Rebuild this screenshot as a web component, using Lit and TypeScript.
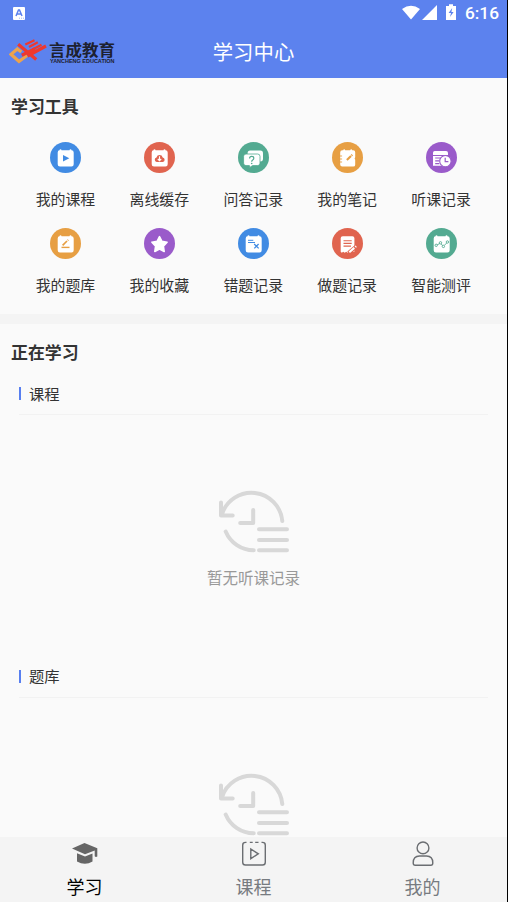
import { LitElement, html, svg, css } from "lit";
import { customElement, property } from "lit/decorators.js";

const pad = svg`<path d="M9.5 8.3q0-1 1-1t1 1h8q0-1 1-1t1 1q2.2 0 2.2 2.2v11.8q0 2.3-2.2 2.3h-11.5q-2.3 0-2.3-2.3V10.5q0-2.2 1.8-2.2z" fill="#fff"/>`;

const glyphs: Record<string, (c: string) => unknown> = {
  play: (c) => svg`${pad}<path d="M13 13v6.4l6.3-3.2z" fill=${c}/>`,
  cloud: (c) => svg`${pad}<path d="M12.7 20a2.3 2.3 0 0 1-.2-4.5 3.2 3.2 0 0 1 6.2 0 2.3 2.3 0 0 1 .2 4.5z" fill=${c}/>
    <path d="M15.5 14.3v4.3M13.8 17l1.7 1.7 1.7-1.7" fill="none" stroke="#fff" stroke-width="1.1"/>`,
  ask: (c) => svg`<rect x="9.6" y="8.6" width="15.4" height="10.8" rx="2.6" fill="#fff"/>
    <path d="M8 12h11.6q2.4 0 2.4 2.4v6.8q0 2.4-2.4 2.4h-5l-2.8 1.8-.4-1.8H8q-2.4 0-2.4-2.4v-6.8Q5.6 12 8 12z" fill="#fff" stroke=${c} stroke-width=".8"/>
    <path d="M11.6 16.4q0-2 2.1-2t2.1 1.8q0 1-1.1 1.7t-1 1.8" fill="none" stroke=${c} stroke-width="1.2"/><circle cx="13.7" cy="21.5" r=".8" fill=${c}/>`,
  note: (c) => svg`<path d="M10.3 8.2h.9q.2-1 1-1t1 1h5q.2-1 1-1t1 1h1q2 0 2 2v5l-.6 1.2.6 1.3v5q0 1.9-2 1.9h-11q-2 0-2-2v-12q0-2.4 2.1-2.4z" fill="#fff"/>
    <path d="M7.5 14h2.6M7.5 17h2.6M7.5 20h2.6" stroke=${c} stroke-width=".9"/>
    <path d="M14.9 18.1l4.1-4.1" stroke=${c} stroke-width="2.1"/><path d="M19.5 13.5l.8-.8" stroke=${c} stroke-width="2"/>`,
  clock: (c) => svg`<path d="M8.7 9H20q2 0 2 2v2H7v-2.3Q7 9 8.7 9zM7 14.1h15v8q0 1.7-2 1.7H7z" fill="#fff"/>
    <path d="M9.2 16h5.7M9.2 18.8h4M9.2 21.6h4" stroke=${c} stroke-width="1.2"/>
    <circle cx="19.4" cy="19.2" r="5.7" fill="#fff" stroke=${c} stroke-width="1.1"/><path d="M19.2 15.8v3.8h3.2" fill="none" stroke=${c} stroke-width="1.2"/>`,
  edit: (c) => svg`${pad}<path d="M11.5 19.4h8" stroke=${c} stroke-width="1.4"/><path d="M12.6 17.3l4.4-4.3" stroke=${c} stroke-width="1.7"/><path d="M17.7 12.4l.6-.6" stroke=${c} stroke-width="1.7"/>`,
  star: () => svg`<path d="M15.5 8.6l2.4 4.7 5.2.9-3.7 3.9.8 5.4-4.7-2.4-4.7 2.4.8-5.4-3.7-3.9 5.2-.9z" fill="#fff" stroke="#fff" stroke-width="1.6" stroke-linejoin="round"/>`,
  wrong: (c) => svg`${pad}<path d="M10 12.3h5.3M10 14.5h7" stroke=${c} stroke-width="1"/><path d="M16.2 16l4.5 4.4M20.6 16l-4.3 4.4" stroke=${c} stroke-width="1.3"/>`,
  write: (c) => svg`<path d="M10.8 8.2h9.6q2 0 2 2v13.6h-2.5l-1.2 1-1.5-1-1.5 1-1.5-1-1.5 1-1.5-1-1.4 1-1.1-1V10.3q0-2.1 2.1-2.1z" fill="#fff"/>
    <path d="M11.5 12.7h8.2M11.5 15.4h8.2M11.5 18.1h7.5" stroke=${c} stroke-width="1.1"/>
    <path d="M16.6 25l7.4-6.2" stroke=${c} stroke-width="4"/><path d="M17.3 24.2l5-4.3M23.3 19l.9-.8" stroke="#fff" stroke-width="2.1"/>`,
  chart: (c) => svg`${pad}<path d="M11 16.9l3-1.5M15.1 15.7l1.6 2.2M18.3 17.4l2.6-2.6" stroke=${c} stroke-width=".9"/>
    <g fill="#fff" stroke=${c} stroke-width=".9"><circle cx="10.2" cy="17.3" r="1.2"/><circle cx="14.5" cy="14.8" r="1.2"/><circle cx="17.4" cy="18.4" r="1.2"/><circle cx="21.4" cy="14" r="1.2"/></g>`,
};

const tools = [
  ["play", "#418be3", "我的课程"],
  ["cloud", "#e0644f", "离线缓存"],
  ["ask", "#53aa91", "问答记录"],
  ["note", "#e79f43", "我的笔记"],
  ["clock", "#9a5bca", "听课记录"],
  ["edit", "#e79f43", "我的题库"],
  ["star", "#9a5bca", "我的收藏"],
  ["wrong", "#418be3", "错题记录"],
  ["write", "#e0644f", "做题记录"],
  ["chart", "#53aa91", "智能测评"],
];

@customElement("empty-panel")
class EmptyPanel extends LitElement {
  @property() heading = "";
  static styles = css`
    :host { display: block; height: 282.5px; padding: 0 19px; box-sizing: border-box; }
    .head { display: flex; align-items: center; height: 41px; gap: 8px; border-bottom: 1px solid #f2f2f2; font-size: 15.3px; line-height: 20px; color: #333; }
    .head span:last-child { margin-top: -2px; }
    .bar { width: 2px; height: 13px; background: #587ff0; }
    .body { display: flex; flex-direction: column; align-items: center; padding-top: 73px; }
    .text { margin-top: 12px; font-size: 15.5px; line-height: 22px; color: #999; }
    svg { display: block; }
  `;
  render() {
    return html`
      <div class="head"><span class="bar"></span><span>${this.heading}</span></div>
      <div class="body">
        <svg width="72" height="66" viewBox="0 0 72 66" fill="none" stroke="#d8d8d8" stroke-width="4" stroke-linecap="round" stroke-linejoin="round">
          <path d="M3 14.5v13H14.7M4 26A31 31 0 0 1 64.3 33M7.7 43.5A30.5 30.5 0 0 0 35.7 62.3M35.2 22v13H22.2M41 41.3h28M41 52h28M41 62.3h28"/>
        </svg>
        <div class="text">暂无听课记录</div>
      </div>`;
  }
}

@customElement("app-root")
class AppRoot extends LitElement {
  static styles = css`
    :host { display: flex; flex-direction: column; height: 902px; width: 508px; box-sizing: border-box; border-right: 1px solid #000; background: #fafafa; overflow: hidden; font-family: "Noto Sans CJK SC", sans-serif; color: #333; }
    svg { display: block; }
    header { background: #5c82ee; height: 78px; flex: none; color: #fff; }
    .status { height: 26px; display: flex; align-items: center; justify-content: space-between; padding: 0 8px 0 13px; }
    .signals { display: flex; align-items: center; }
    .time { font: 500 17.3px/26px Roboto, sans-serif; margin-left: 8px; }
    .nav { height: 52px; display: grid; grid-template-columns: 1fr 120px 1fr; align-items: center; }
    .logo { margin-left: 9px; }
    .title { font-size: 20.4px; line-height: 28px; text-align: center; margin-top: -2px; }
    main { flex: 1; min-height: 0; overflow: hidden; }
    h2 { margin: 0; padding-left: 11px; font-size: 16.9px; font-weight: 700; line-height: 24px; }
    .tools { box-sizing: border-box; height: 236px; padding-top: 16px; }
    .grid { display: grid; grid-template-columns: repeat(5, 1fr); padding: 24.3px 19px 0 18.5px; grid-auto-rows: 85.4px; }
    .tool { display: flex; flex-direction: column; align-items: center; gap: 15.1px; font-size: 14.9px; line-height: 22px; white-space: nowrap; }
    .gap { height: 9.5px; background: #f4f4f4; }
    .learning { padding-top: 16.5px; }
    .learning h2 { margin-bottom: 9px; }
    footer { flex: none; height: 65px; background: #f4f4f4; display: grid; grid-template-columns: repeat(3, 1fr); }
    .tab { display: flex; flex-direction: column; align-items: center; padding-top: 3px; gap: 6px; font-size: 18px; line-height: 24px; color: #777b80; }
    .active { color: #000; }
  `;

  render() {
    return html`
      <header>
        <div class="status">
          <svg width="12" height="13" viewBox="0 0 12 13"><rect width="12" height="13" rx="1" fill="#fff"/><path d="M3 9l2.5-6h1L9 9M4 7h4" fill="none" stroke="#5c82ee" stroke-width="1.5"/><path d="M6 11.2h5" stroke="#8ca7f3" stroke-width=".8" stroke-dasharray="1"/></svg>
          <div class="signals">
            <svg width="55" height="18" viewBox="0 0 55 18" fill="#fff">
              <path d="M0 5Q9-1.5 18 5L9 15.5zM35 1V16H20z"/>
              <path d="M44 2h3V.2h4V2h3v14H44z"/><path d="M50.2 4l-3.6 5H49L48 13l3.6-5H49.4z" fill="#5c82ee"/>
            </svg>
            <span class="time">6:16</span>
          </div>
        </div>
        <div class="nav">
          <svg class="logo" width="108" height="28" viewBox="0 0 108 28">
            <g fill="none" stroke-width="3.2">
              <path d="M9.5 10L2 16.3l8 7.2 8-6M8.3 11l4 3" stroke="#eda34c"/>
              <g stroke="#ee382f"><path d="M9.2 6.3L27.2 21.5M12.8 17.2L26 10.8M18.5 18L37 8"/><path d="M16.3 6.5L25.5 2.2M20 9l8.8-4.7M23.5 11.5l9-4.8" stroke-width="2.2"/></g>
            </g>
            <text x="40" y="17.6" textLength="66" lengthAdjust="spacingAndGlyphs" font-size="15.5" font-weight="700" fill="#1d2130">言成教育</text>
            <text x="41" y="24.8" textLength="64.5" lengthAdjust="spacingAndGlyphs" font-family="Liberation Sans, sans-serif" font-size="5" font-weight="700" fill="#1d2130">YANCHENG EDUCATION</text>
          </svg>
          <div class="title">学习中心</div>
        </div>
      </header>
      <main>
        <section class="tools">
          <h2>学习工具</h2>
          <div class="grid">
            ${tools.map(([icon, color, label]) => html`
              <div class="tool">
                <svg width="31" height="31" viewBox="0 0 31 31"><circle cx="15.5" cy="15.5" r="15.5" fill=${color}/>${glyphs[icon](color)}</svg>
                <span>${label}</span>
              </div>`)}
          </div>
        </section>
        <div class="gap"></div>
        <section class="learning">
          <h2>正在学习</h2>
          <empty-panel heading="课程"></empty-panel>
          <empty-panel heading="题库"></empty-panel>
        </section>
      </main>
      <footer>
        <div class="tab active">
          <svg width="28" height="28" viewBox="0 0 28 28" fill="#666"><path d="M1 8.6L13.5 3 26.3 8.2v8.3q-1.6 1-2.6-.3v-5.6L14 14.3z"/><path d="M6 13.2l8 3.2 7.5-3v8.2Q14 26 6 21.6z"/></svg>
          <span>学习</span>
        </div>
        <div class="tab">
          <svg width="28" height="28" viewBox="0 0 28 28" fill="none" stroke="#6b6e72" stroke-width="1.4"><path d="M6.5 2.4H5.5Q2.7 2.4 2.7 5.2v17q0 2.8 2.8 2.8h17q2.8 0 2.8-2.8v-17q0-2.8-2.8-2.8h-1M9.8 2.4h2.9M15.2 2.4h3.3M10.8 9v9.6l7.5-4.8z"/></svg>
          <span>课程</span>
        </div>
        <div class="tab">
          <svg width="28" height="28" viewBox="0 0 28 28" fill="none" stroke="#6b6e72" stroke-width="1.4"><circle cx="14" cy="7.9" r="5.9"/><path d="M4.2 23Q4.2 16 10.5 16h7q6.3 0 6.3 7 0 2.3-2 2.3H6.2q-2 0-2-2.3z"/></svg>
          <span>我的</span>
        </div>
      </footer>`;
  }
}
